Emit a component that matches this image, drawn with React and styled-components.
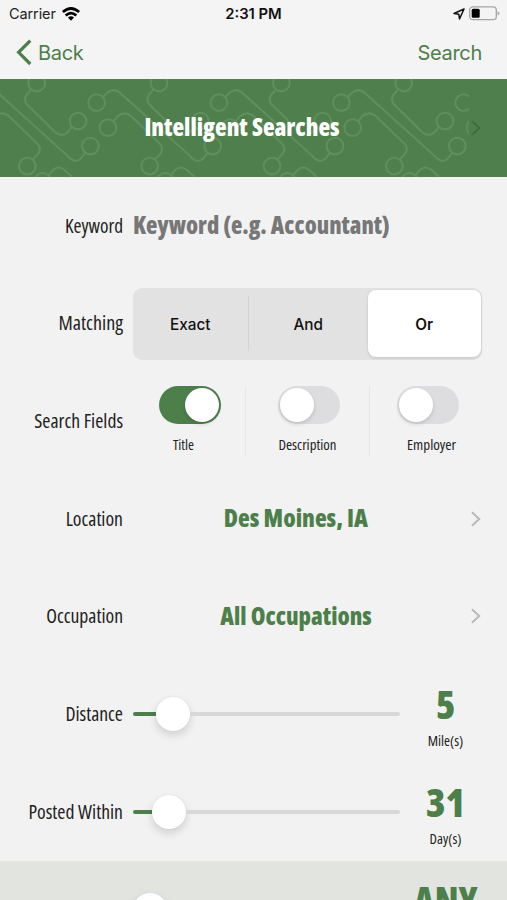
import styled, { createGlobalStyle } from 'styled-components';

const GREEN = '#4c7f4a';

const GlobalStyle = createGlobalStyle`
  * {
    box-sizing: border-box;
  }
  body {
    margin: 0;
    background: #f2f2f2;
    font-family: Inter, "Liberation Sans", sans-serif;
    overflow: hidden;
  }
`;

const tiles = [-2, -1, 0, 1, 2, 3];

function Circuit() {
  return (
    <CircuitSvg viewBox="0 9 1407 293" preserveAspectRatio="none">
      {tiles.map((n) => (
        <g key={n} transform={`translate(${n * 367} 0)`}>
          <circle cx="110" cy="21" r="25" />
          <circle cx="234" cy="135" r="25" />
          <circle cx="290" cy="80" r="25" />
          <circle cx="324" cy="155" r="25" />
          <circle cx="271" cy="210" r="25" />
          <circle cx="82" cy="270" r="25" />
          <circle cx="128" cy="316" r="25" />
          <path d="M92 42 L80 56 Q70 70 80 84 L165 168 Q186 186 203 168 L215 153" />
          <path d="M309 63 L322 50 Q344 33 364 54 L568 238 Q590 264 608 249 L622 231" />
          <path d="M341 135 L352 121 Q374 103 394 121 L475 199 Q495 217 480 235 L465 250" />
          <path d="M146 298 L156 284 Q174 266 194 282 L216 302" />
        </g>
      ))}
    </CircuitSvg>
  );
}

function Chevron({ color = '#b9b9bb' }) {
  return (
    <ChevronSvg viewBox="0 0 10 16" stroke={color}>
      <path d="M1 1.2 L8.2 8 L1 14.8" />
    </ChevronSvg>
  );
}

function SliderRow({ label, at, value, unit, shaded, sx }) {
  return (
    <Row $shaded={shaded}>
      <Label>{label}</Label>
      <Slider>
        <Fill style={{ width: at }} />
        <Thumb />
        <Track />
      </Slider>
      <Amount>
        <Value $sx={sx}>{value}</Value>
        <Caption>{unit}</Caption>
      </Amount>
    </Row>
  );
}

function Field({ label, on, shift, last, sx }) {
  return (
    <FieldCell $last={last}>
      <Switch $on={on} $shift={shift}>
        <Knob />
      </Switch>
      <Caption $sx={sx}>{label}</Caption>
    </FieldCell>
  );
}

export default function App() {
  return (
    <>
      <GlobalStyle />
      <Screen>
        <StatusBar>
          <Carrier>
            Carrier
            <svg width="18" height="14" viewBox="0 0 18 14" fill="none" stroke="#000" strokeWidth="2.7">
              <path d="M.9 5.1 Q9 -2.1 17.1 5.1" />
              <path d="M3.7 8.6 Q9 3.8 14.3 8.6" />
              <path d="M6 10.6 Q9 8 12 10.6 L9 13.8 Z" fill="#000" stroke="none" />
            </svg>
          </Carrier>
          <Clock>2:31 PM</Clock>
          <Power>
            <svg width="12" height="12" viewBox="0 0 12 12" fill="none" stroke="#111" strokeWidth="1.5" strokeLinejoin="round">
              <path d="M11 1 L1 5.5 L5.8 6.2 L6.5 11 Z" />
            </svg>
            <svg width="31" height="15" viewBox="0 0 31 15">
              <rect x=".7" y=".9" width="26.6" height="12.8" rx="3.2" fill="none" stroke="#a5a5a5" strokeWidth="1.3" />
              <rect x="2.7" y="2.8" width="8" height="9" rx="1.5" fill="#000" />
              <path d="M28.6 5 Q32 7.3 28.6 9.8 Z" fill="#a5a5a5" />
            </svg>
          </Power>
        </StatusBar>
        <NavBar>
          <NavButton>
            <svg width="16" height="27" viewBox="0 0 16 27" fill="none" stroke={GREEN} strokeWidth="3.2">
              <path d="M14.3 1.6 L2.6 13.3 L14.3 25" />
            </svg>
            Back
          </NavButton>
          <NavButton>Search</NavButton>
        </NavBar>
        <Banner>
          <Circuit />
          <BannerTitle>Intelligent Searches</BannerTitle>
          <Chevron color="#3f6b40" />
        </Banner>
        <Row>
          <Label $sx={0.98}>Keyword</Label>
          <Placeholder $sx={0.977}>Keyword (e.g. Accountant)</Placeholder>
        </Row>
        <Row>
          <Label $sx={1.02}>Matching</Label>
          <Segments>
            <Segment $divided>Exact</Segment>
            <Segment>And</Segment>
            <Segment $selected>Or</Segment>
          </Segments>
        </Row>
        <Row>
          <Label>Search Fields</Label>
          <Fields>
            <Field label="Title" on shift={14} />
            <Field label="Description" shift={3} sx={1.02} />
            <Field label="Employer" shift={-7} last sx={1.04} />
          </Fields>
        </Row>
        <Row>
          <Label>Location</Label>
          <Choice $sx={1.01}>Des Moines, IA</Choice>
          <Chevron />
        </Row>
        <Row>
          <Label>Occupation</Label>
          <Choice $sx={0.99}>All Occupations</Choice>
          <Chevron />
        </Row>
        <SliderRow label="Distance" at={23} value="5" unit="Mile(s)" />
        <SliderRow label="Posted Within" at={19} value="31" unit="Day(s)" />
        <SliderRow label="" at={0} value="ANY" unit="" shaded sx={0.92} />
      </Screen>
    </>
  );
}

const Screen = styled.div`
  width: 507px;
  height: 900px;
  overflow: hidden;
  background: #f2f2f2;
`;

const StatusBar = styled.div`
  display: grid;
  grid-template-columns: 1fr auto 1fr;
  align-items: center;
  height: 27px;
  padding: 0 7px 0 9px;
  font-size: 14.5px;
  background: #f4f4f4;
`;

const Carrier = styled.div`
  display: flex;
  align-items: center;
  gap: 6px;
  letter-spacing: -0.1px;
  color: #222;
`;

const Clock = styled.div`
  margin-right: 2px;
  font-weight: 600;
  font-size: 14.8px;
  color: #111;
`;

const Power = styled.div`
  display: flex;
  align-items: center;
  justify-content: flex-end;
  gap: 4px;
`;

const NavBar = styled.div`
  display: flex;
  justify-content: space-between;
  align-items: center;
  height: 52px;
  padding: 0 25px 1px 16px;
  background: #f4f4f4;
`;

const NavButton = styled.div`
  display: flex;
  align-items: center;
  gap: 6px;
  color: ${GREEN};
  font-size: 20px;
  letter-spacing: -0.3px;
`;

const Banner = styled.div`
  position: relative;
  display: flex;
  align-items: center;
  height: 97.73px;
  padding: 0 26px 0 13px;
  background: #4f7f4c;
`;

const CircuitSvg = styled.svg`
  position: absolute;
  left: 0;
  top: 0;
  width: 469px;
  height: 100%;
  fill: none;
  stroke: #5f8f5d;
  stroke-width: 6;
`;

const ChevronSvg = styled.svg`
  position: relative;
  flex: none;
  width: 10px;
  height: 16px;
  fill: none;
  stroke-width: 2;
`;

const Condensed = styled.div`
  font-family: "Open Sans", "Noto Sans", sans-serif;
  font-stretch: 75%;
  white-space: nowrap;
  transform: scaleX(${(p) => p.$sx || 1});
`;

const BannerTitle = styled(Condensed)`
  flex: 1;
  padding-bottom: 2px;
  text-align: center;
  font-size: 24px;
  font-weight: 800;
  color: #fff;
`;

const Row = styled.div`
  display: flex;
  align-items: center;
  height: 97.73px;
  padding-right: 26px;
  background: ${(p) => (p.$shaded ? '#e1e4df' : 'transparent')};
`;

const Label = styled(Condensed)`
  flex: none;
  width: 123px;
  margin-right: 10px;
  padding-bottom: 1px;
  text-align: right;
  transform-origin: right;
  font-size: 19.7px;
  color: #222;
`;

const Placeholder = styled(Condensed)`
  padding-bottom: 2px;
  transform-origin: left;
  font-size: 24px;
  font-weight: 800;
  color: #777;
`;

const Choice = styled(Condensed)`
  flex: 1;
  padding: 0 12px 2px 0;
  text-align: center;
  font-size: 24px;
  font-weight: 800;
  color: ${GREEN};
`;

const Segments = styled.div`
  display: grid;
  flex: none;
  grid-template-columns: 115.5px 119.5px 1fr;
  width: 349px;
  height: 71.5px;
  margin-top: 1px;
  padding: 1.5px 1.5px 2.5px 0;
  border-radius: 9px;
  background: #e2e2e2;
`;

const Segment = styled.div`
  display: flex;
  align-items: center;
  justify-content: center;
  padding-top: 2px;
  margin: ${(p) => (p.$selected ? '0' : '6px 0')};
  border-right: ${(p) => (p.$divided ? '1.5px solid #d3d3d3' : '0')};
  border-radius: ${(p) => (p.$selected ? '8px' : '0')};
  background: ${(p) => (p.$selected ? '#fff' : 'transparent')};
  box-shadow: ${(p) => (p.$selected ? '0 1px 3px rgba(0, 0, 0, 0.15)' : 'none')};
  font-size: 15.3px;
  font-weight: ${(p) => (p.$selected ? 600 : 500)};
  color: #111;
`;

const Fields = styled.div`
  display: flex;
  flex: none;
  height: 71px;
  margin-left: -11px;
`;

const FieldCell = styled.div`
  display: flex;
  flex-direction: column;
  align-items: center;
  justify-content: space-between;
  width: 123.9px;
  padding-bottom: 1px;
  border-right: ${(p) => (p.$last ? '0' : '1.5px solid #e6e7e8')};
`;

const Switch = styled.div`
  display: flex;
  justify-content: ${(p) => (p.$on ? 'flex-end' : 'flex-start')};
  width: 62px;
  height: 38px;
  margin-left: ${(p) => p.$shift}px;
  padding: 2px;
  border-radius: 19px;
  background: ${(p) => (p.$on ? GREEN : '#dddddf')};
`;

const Knob = styled.div`
  width: 34px;
  height: 34px;
  border-radius: 50%;
  background: #fff;
  box-shadow: 0 2px 4px rgba(0, 0, 0, 0.14);
`;

const Caption = styled(Condensed)`
  font-size: 14.5px;
  line-height: 22px;
  color: #222;
`;

const Slider = styled.div`
  display: flex;
  align-items: center;
  flex: none;
  width: 266.5px;
`;

const Fill = styled.div`
  height: 4px;
  border-radius: 2px 0 0 2px;
  background: ${GREEN};
`;

const Thumb = styled.div`
  flex: none;
  width: 33.5px;
  height: 33.5px;
  border-radius: 50%;
  background: #fff;
  box-shadow: 0 4px 9px rgba(0, 0, 0, 0.15), 0 0 1px rgba(0, 0, 0, 0.12);
`;

const Track = styled.div`
  flex: 1;
  height: 3.5px;
  border-radius: 0 2px 2px 0;
  background: #d8d8d8;
`;

const Amount = styled.div`
  display: flex;
  flex-direction: column;
  align-items: center;
  align-self: flex-start;
  flex: none;
  gap: 3px;
  width: 73px;
  margin-left: 9.5px;
  padding-top: 16px;
`;

const Value = styled(Condensed)`
  font-size: 39.5px;
  line-height: 46px;
  font-weight: 800;
  color: ${GREEN};
`;
